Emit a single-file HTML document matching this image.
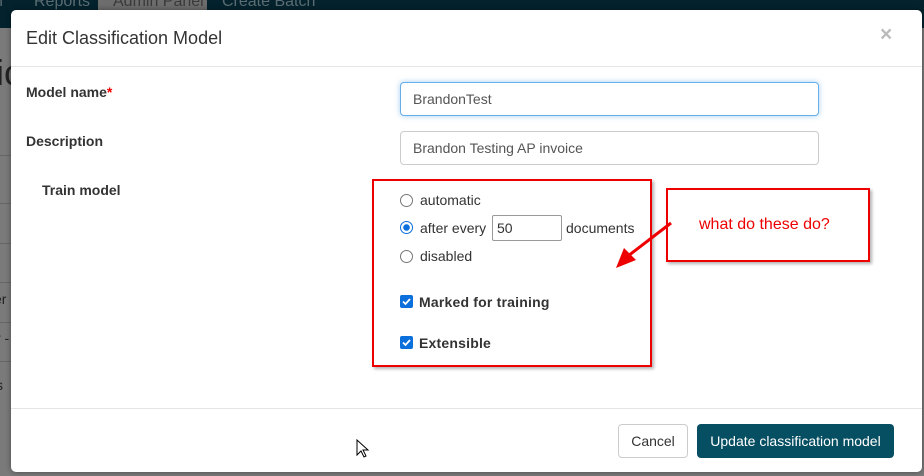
<!DOCTYPE html>
<html><head><meta charset="utf-8"><style>
*{box-sizing:border-box;margin:0;padding:0}
body{width:924px;height:476px;overflow:hidden;background:#7a7a7a;font-family:"Liberation Sans",Arial,sans-serif;position:relative;color:#333}
.a{position:absolute}
.nav{left:0;top:0;width:924px;height:28px;background:#03222d}
.nt{top:-7px;font-size:16px;color:#5b6c72}
.modal{left:11px;top:10px;width:911px;height:462px;background:#fff;border-radius:5px;box-shadow:0 0 6px rgba(0,0,0,.4)}
.inp{border:1px solid #ccc;border-radius:4px;height:34px;font-size:14px;padding:8px 12px;color:#555;background:#fff}
.lbl{font-weight:bold;font-size:14px;color:#333}
.radio{width:13px;height:13px;border:1.5px solid #777;border-radius:50%}
.cb{width:13px;height:13px;background:#0b6fdc;border-radius:2px}
.t{font-size:14px;color:#333}
</style></head><body>
<div class="a nav"></div>
<div class="a nt" style="left:-6px">n</div>
<div class="a nt" style="left:34px">Reports</div>
<div class="a" style="left:98px;top:0;width:109px;height:10px;background:#6d6d6d"></div>
<div class="a nt" style="left:113px;color:#3a3a3a">Admin Panel</div>
<div class="a nt" style="left:222px">Create Batch</div>
<div class="a" style="left:-4px;top:52px;font-size:36px;color:#222">ic</div>
<div class="a" style="left:0;top:155px;width:11px;height:1px;background:#666"></div>
<div class="a" style="left:0;top:203px;width:11px;height:1px;background:#666"></div>
<div class="a" style="left:0;top:243px;width:11px;height:1px;background:#666"></div>
<div class="a" style="left:0;top:282px;width:11px;height:1px;background:#666"></div>
<div class="a" style="left:0;top:322px;width:11px;height:1px;background:#666"></div>
<div class="a" style="left:0;top:361px;width:11px;height:1px;background:#666"></div>
<div class="a" style="left:-6px;top:291px;font-size:14px;color:#222">er</div>
<div class="a" style="left:-4px;top:330px;font-size:14px;color:#222">r -</div>
<div class="a" style="left:-4px;top:377px;font-size:14px;color:#222">s</div>

<div class="a modal"></div>
<div class="a" style="left:26px;top:28px;font-size:18px;color:#333">Edit Classification Model</div>
<div class="a" style="left:880px;top:23px;font-size:21px;font-weight:bold;color:#bbb">×</div>
<div class="a" style="left:11px;top:66px;width:911px;height:1px;background:#e5e5e5"></div>

<div class="a lbl" style="left:26px;top:84px">Model name<span style="color:#e00">*</span></div>
<div class="a inp" style="left:400px;top:82px;width:419px;border-color:#66afe9;box-shadow:0 0 6px rgba(102,175,233,.6)">BrandonTest</div>
<div class="a lbl" style="left:26px;top:133px">Description</div>
<div class="a inp" style="left:400px;top:131px;width:419px">Brandon Testing AP invoice</div>
<div class="a lbl" style="left:42px;top:182px">Train model</div>

<div class="a radio" style="left:400px;top:194px"></div>
<div class="a t" style="left:420px;top:192px">automatic</div>
<div class="a radio" style="left:400px;top:221px;border-color:#0b6fdc;background:radial-gradient(circle,#0b6fdc 0 3px,#fff 3.5px)"></div>
<div class="a t" style="left:420px;top:220px">after every</div>
<div class="a inp" style="left:492px;top:215px;width:70px;height:26px;padding:4px 4px;border-color:#999;border-radius:2px;color:#333">50</div>
<div class="a t" style="left:566px;top:220px">documents</div>
<div class="a radio" style="left:400px;top:250px"></div>
<div class="a t" style="left:420px;top:248px">disabled</div>
<div class="a cb" style="left:400px;top:295px"><svg width="13" height="13"><path d="M3 6.5l2.5 2.5 4.5-5" stroke="#fff" stroke-width="1.8" fill="none"/></svg></div>
<div class="a lbl" style="left:419px;top:294px;letter-spacing:.2px">Marked for training</div>
<div class="a cb" style="left:400px;top:336px"><svg width="13" height="13"><path d="M3 6.5l2.5 2.5 4.5-5" stroke="#fff" stroke-width="1.8" fill="none"/></svg></div>
<div class="a lbl" style="left:419px;top:335px;letter-spacing:.2px">Extensible</div>

<div class="a" style="left:372px;top:179px;width:280px;height:188px;border:2px solid #e00;box-shadow:2px 2px 3px rgba(0,0,0,.3)"></div>
<div class="a" style="left:666px;top:188px;width:204px;height:74px;border:2px solid #e00;box-shadow:2px 2px 3px rgba(0,0,0,.3)"></div>
<div class="a" style="left:699px;top:216px;font-size:16px;color:#e00">what do these do?</div>
<svg class="a" style="left:600px;top:210px" width="80" height="70"><line x1="71" y1="13" x2="28" y2="46" stroke="#e00" stroke-width="3"/><polygon points="16,58 24,38 36,50" fill="#e00"/></svg>

<div class="a" style="left:11px;top:408px;width:911px;height:1px;background:#e5e5e5"></div>
<div class="a" style="left:618px;top:424px;width:70px;height:34px;border:1px solid #ccc;border-radius:4px;font-size:14px;text-align:center;line-height:32px">Cancel</div>
<div class="a" style="left:697px;top:424px;width:197px;height:34px;background:#064e61;border-radius:4px;font-size:14px;color:#fff;text-align:center;line-height:34px">Update classification model</div>
<svg class="a" style="left:356px;top:439px" width="14" height="20"><path d="M1 1v15l4-4 3 6 2-1-3-6h5z" fill="#fff" stroke="#000" stroke-width="1"/></svg>
</body></html>
